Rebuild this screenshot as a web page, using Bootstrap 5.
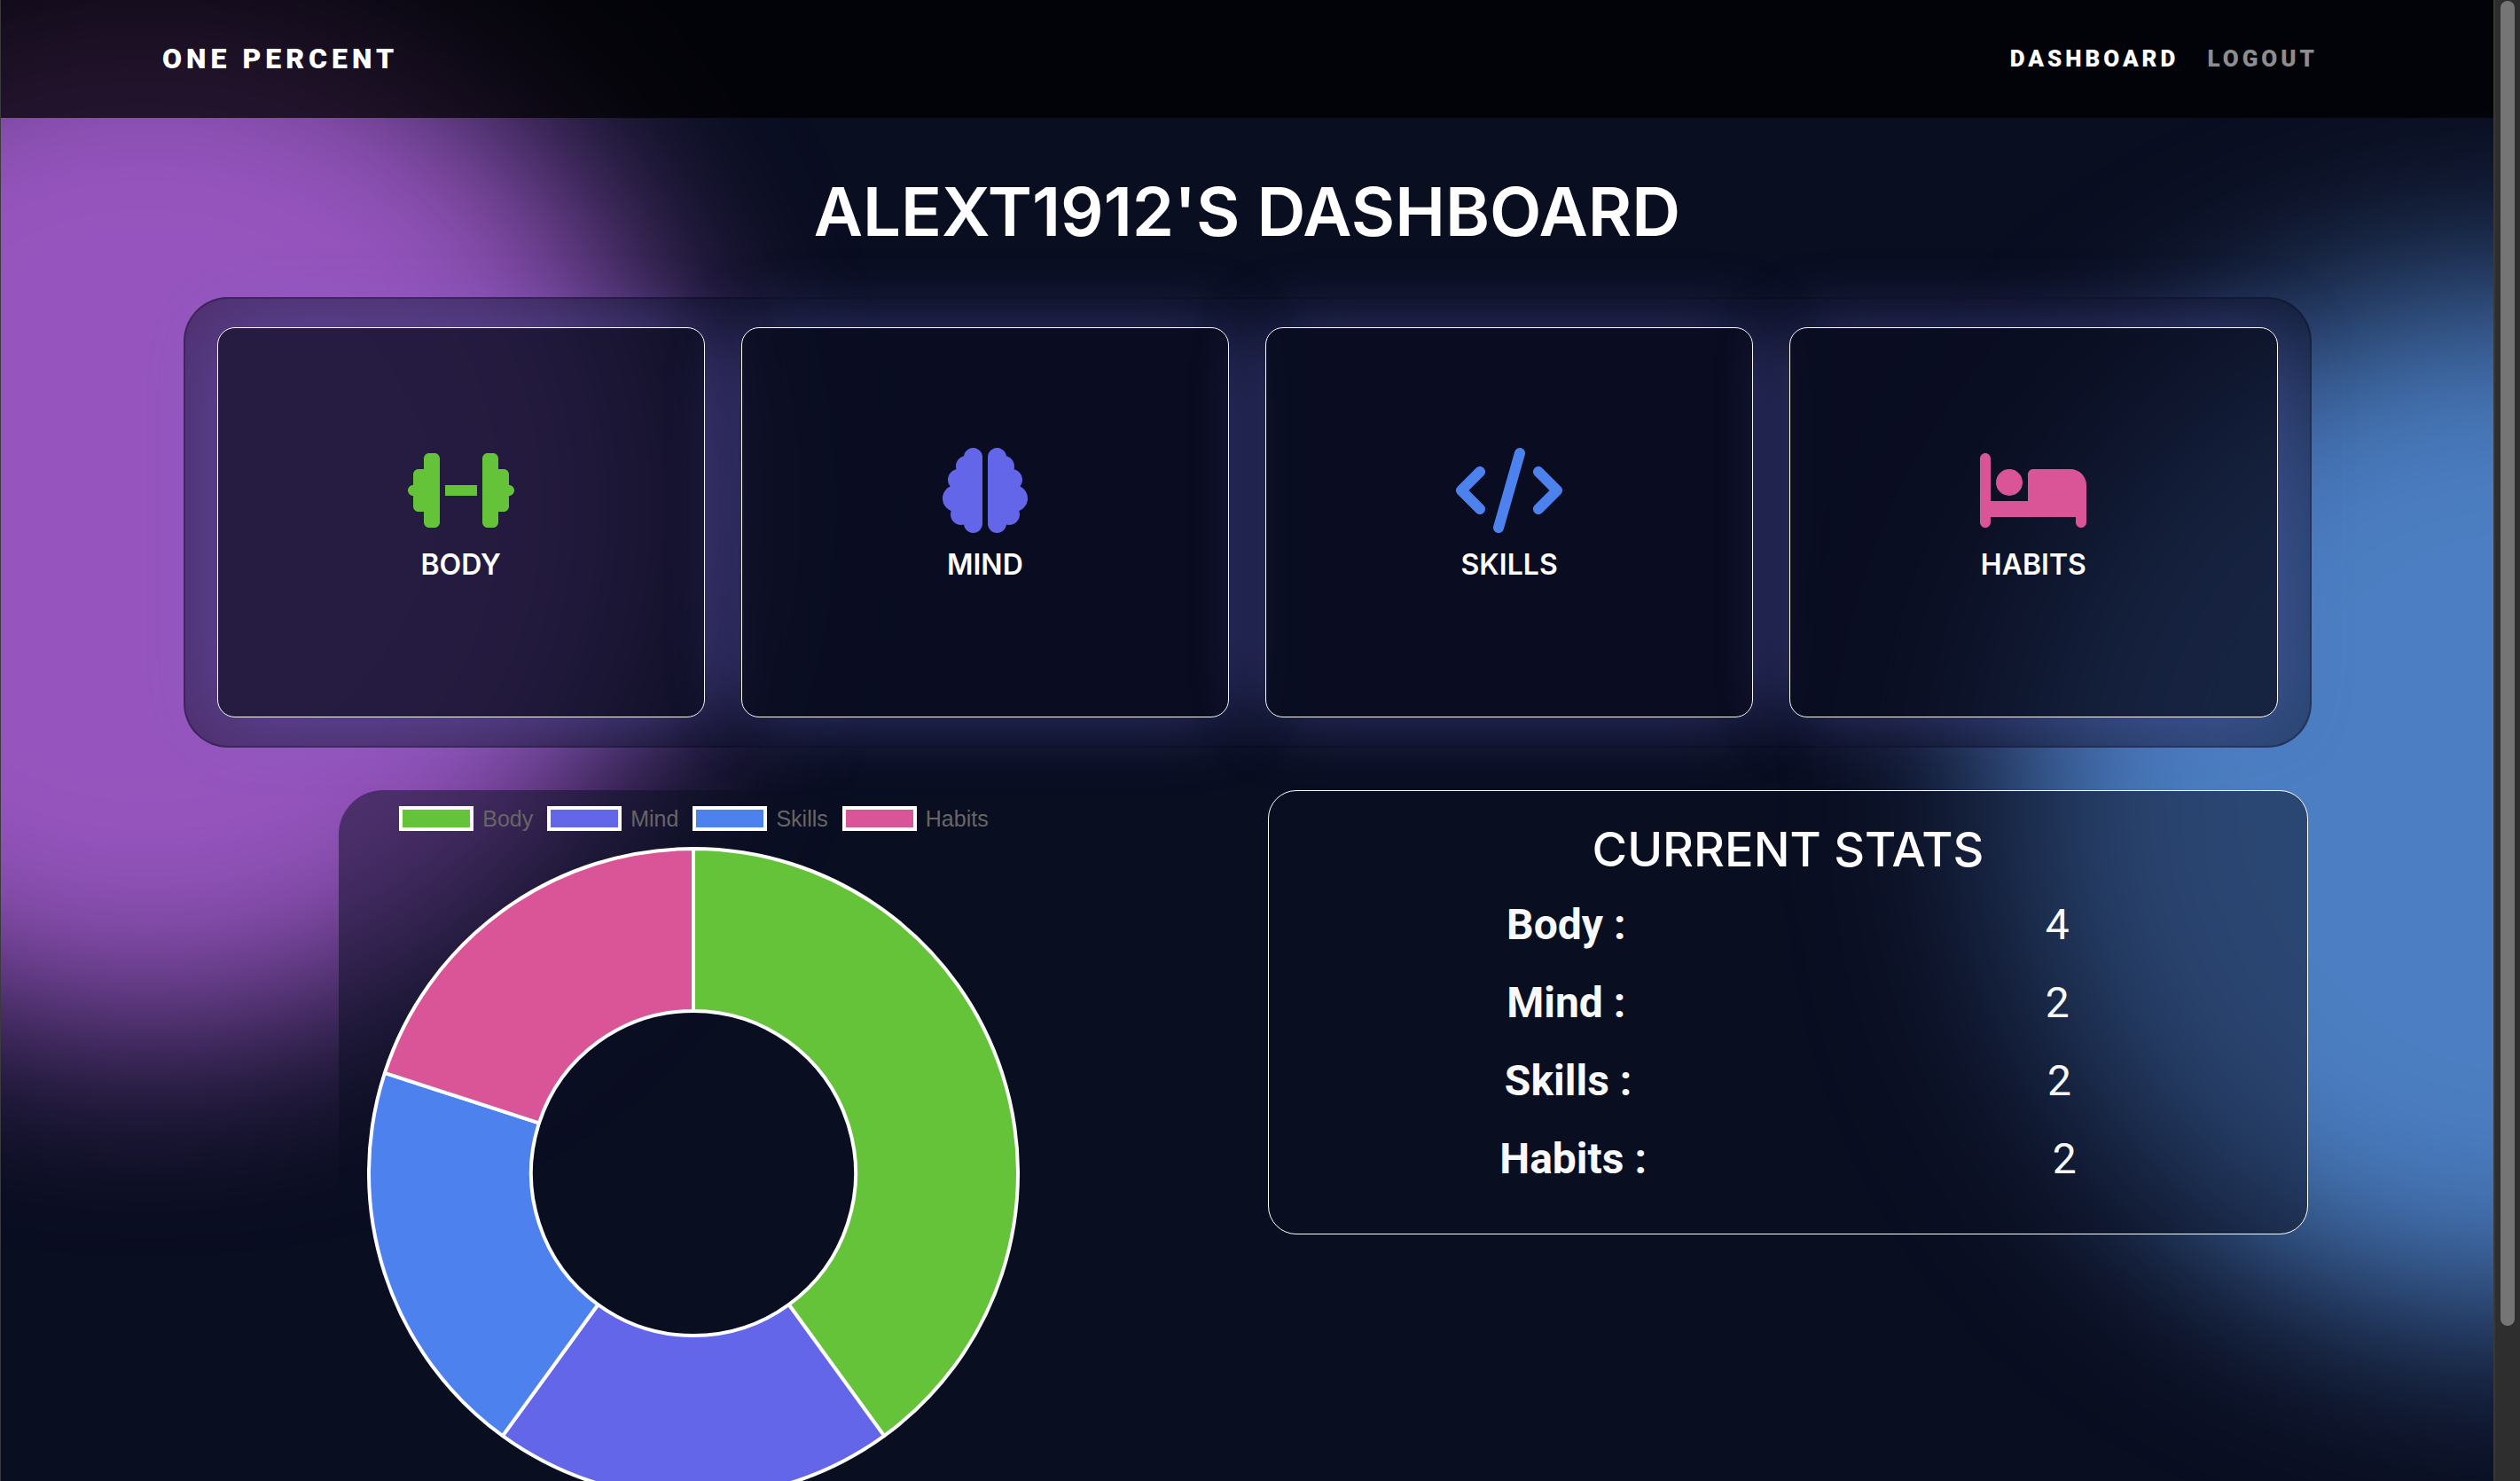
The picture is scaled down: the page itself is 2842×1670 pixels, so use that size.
<!DOCTYPE html>
<html lang="en">
<head>
<meta charset="utf-8">
<meta name="viewport" content="width=device-width, initial-scale=1">
<title>One Percent</title>
<link rel="stylesheet" href="https://cdn.jsdelivr.net/npm/bootstrap@5.3.0/dist/css/bootstrap.min.css">
<style>
:root{--night:10,14,33;--body-c:#65c33a;--mind-c:#6466e9;--skills-c:#4d82ee;--habits-c:#da5597}
body{background:rgb(var(--night));color:#fff;font-family:Roboto,"Liberation Sans",sans-serif}
.shell{height:100vh;border-left:1px solid #3a3a3f;background:rgb(var(--night))}
.page{min-width:0;overflow:hidden auto;scrollbar-width:none;position:relative;isolation:isolate}
.page::-webkit-scrollbar{display:none}
.orb{position:absolute;z-index:-1;border-radius:50%;filter:blur(110px)}
.orb-purple{width:1180px;height:1180px;left:-425px;top:-20px;background:#9655be}
.orb-blue{width:1160px;height:1160px;right:-610px;top:325px;background:#4b7ec2}
.topbar{background:rgba(0,0,0,.74);height:133px;padding:0 182px 2px}
.topbar .navbar-brand{font-size:32px;font-weight:900;letter-spacing:5px;line-height:48px;padding:0;margin:0}
.topbar .navbar-nav .nav-link{font-size:26px;font-weight:900;letter-spacing:4px;line-height:40px;padding:8px 16px;color:#8d8d90}
.topbar .navbar-nav .nav-link.active{color:#fff}
.heading{font-family:Inter,"Liberation Sans",sans-serif;font-weight:600}
.page-title{font-size:76px;line-height:96px;margin:57px 0 49px}
.wrap{max-width:2400px}
.tiles{background:rgba(var(--night),.5);border:2px solid rgba(5,7,20,.3);border-radius:50px;padding:32px 36px;gap:41px}
.tile{flex:1 1 0;height:440px;border:1px solid #fff;border-radius:20px;background:rgba(var(--night),.6);box-shadow:0 0 80px rgba(110,110,225,.42);color:#fff}
.tile svg{height:96px}
.tile h2{font-size:32px;line-height:40px;margin:16px 0}
.lower{gap:76px;padding:0 4px;margin-top:48px}
.chart-panel{width:800px;border-radius:50px;background:rgba(var(--night),.5);padding:18px 32px 32px}
.legend-row{gap:16px;margin-bottom:18px;font:25px/28px "Liberation Sans",Arial,sans-serif;color:#666}
.legend-item{gap:10px}
.swatch{width:84px;height:28px;border:4px solid #fff}
.stats{flex:0 0 49%;border:1px solid #fff;border-radius:32px;background:rgba(var(--night),.5);padding:32px 31px}
.stats h2{font-size:54px;font-weight:500;line-height:67px;margin-bottom:16px}
.stats dl{font-size:48px;line-height:72px;color:#f8f9fa}
.stats dl>div{margin-bottom:16px}
.stats dd{margin:0}
.scroller{flex:0 0 30px;background:#2e2e2e;border-left:2px solid #383838;padding:1px 6px}
.scroller-thumb{height:1494px;width:16px;border-radius:8px;background:#757575}
</style>
<script src="https://cdn.jsdelivr.net/npm/bootstrap@5.3.0/dist/js/bootstrap.bundle.min.js"></script>
</head>
<body>
<div class="shell d-flex">
  <div class="page flex-grow-1">
    <div class="orb orb-purple"></div>
    <div class="orb orb-blue"></div>

    <nav class="topbar navbar navbar-expand navbar-dark d-flex justify-content-between">
      <a class="navbar-brand" href="#">ONE PERCENT</a>
      <div class="navbar-nav">
        <a class="nav-link active" href="#" aria-current="page">DASHBOARD</a>
        <a class="nav-link" href="#">LOGOUT</a>
      </div>
    </nav>

    <main>
      <h1 class="heading page-title text-center">ALEXT1912'S DASHBOARD</h1>

      <section class="wrap tiles d-flex mx-auto">
        <a href="#" class="tile d-flex flex-column align-items-center justify-content-center text-decoration-none">
          <svg viewBox="0 0 640 512" fill="var(--body-c)" aria-hidden="true"><path d="M96 64c0-17.7 14.3-32 32-32h32c17.7 0 32 14.3 32 32V224v64V448c0 17.7-14.3 32-32 32H128c-17.7 0-32-14.3-32-32V384H64c-17.7 0-32-14.3-32-32V288c-17.7 0-32-14.3-32-32s14.3-32 32-32V160c0-17.7 14.3-32 32-32H96V64zm448 0v64h32c17.7 0 32 14.3 32 32v64c17.7 0 32 14.3 32 32s-14.3 32-32 32v64c0 17.7-14.3 32-32 32H544v64c0 17.7-14.3 32-32 32H480c-17.7 0-32-14.3-32-32V288 224 64c0-17.7 14.3-32 32-32h32c17.7 0 32 14.3 32 32zM416 224v64H224V224H416z"/></svg>
          <h2 class="heading">BODY</h2>
        </a>
        <a href="#" class="tile d-flex flex-column align-items-center justify-content-center text-decoration-none">
          <svg viewBox="0 0 512 512" fill="var(--mind-c)" aria-hidden="true"><path d="M184 0c30.9 0 56 25.1 56 56V456c0 30.9-25.1 56-56 56c-28.9 0-52.7-21.9-55.7-50.1c-5.2 1.4-10.7 2.1-16.3 2.1c-35.3 0-64-28.7-64-64c0-7.4 1.3-14.6 3.6-21.2C21.4 367.4 0 338.2 0 304c0-31.9 18.7-59.5 45.8-72.3C37.1 220.8 32 207 32 192c0-30.7 21.6-56.3 50.4-62.6C80.8 123.9 80 118 80 112c0-29.9 20.6-55.1 48.3-62.1C131.3 21.9 155.1 0 184 0zM328 0c28.9 0 52.6 21.9 55.7 49.9c27.8 7 48.3 32.1 48.3 62.1c0 6-.8 11.9-2.4 17.4c28.8 6.2 50.4 31.9 50.4 62.6c0 15-5.1 28.8-13.8 39.7C493.3 244.5 512 272.1 512 304c0 34.2-21.4 63.4-51.6 74.8c2.3 6.6 3.6 13.8 3.6 21.2c0 35.3-28.7 64-64 64c-5.6 0-11.1-.7-16.3-2.1c-3 28.2-26.8 50.1-55.7 50.1c-30.9 0-56-25.1-56-56V56c0-30.9 25.1-56 56-56z"/></svg>
          <h2 class="heading">MIND</h2>
        </a>
        <a href="#" class="tile d-flex flex-column align-items-center justify-content-center text-decoration-none">
          <svg viewBox="0 0 640 512" fill="var(--skills-c)" aria-hidden="true"><path d="M392.8 1.2c-17-4.9-34.7 5-39.6 22l-128 448c-4.9 17 5 34.7 22 39.6s34.7-5 39.6-22l128-448c4.9-17-5-34.7-22-39.6zm80.6 120.1c-12.5 12.5-12.5 32.8 0 45.3L562.7 256l-89.4 89.4c-12.5 12.5-12.5 32.8 0 45.3s32.8 12.5 45.3 0l112-112c12.5-12.5 12.5-32.8 0-45.3l-112-112c-12.5-12.5-32.8-12.5-45.3 0zm-306.7 0c-12.5-12.5-32.8-12.5-45.3 0l-112 112c-12.5 12.5-12.5 32.8 0 45.3l112 112c12.5 12.5 32.8 12.5 45.3 0s12.5-32.8 0-45.3L77.3 256l89.4-89.4c12.5-12.5 12.5-32.8 0-45.3z"/></svg>
          <h2 class="heading">SKILLS</h2>
        </a>
        <a href="#" class="tile d-flex flex-column align-items-center justify-content-center text-decoration-none">
          <svg viewBox="0 0 640 512" fill="var(--habits-c)" aria-hidden="true"><path d="M32 32c17.7 0 32 14.3 32 32V320H288V160c0-17.7 14.3-32 32-32H544c53 0 96 43 96 96V448c0 17.7-14.3 32-32 32s-32-14.3-32-32V416H352 320 64v32c0 17.7-14.3 32-32 32s-32-14.3-32-32V64C0 46.3 14.3 32 32 32zm144 96a80 80 0 1 1 0 160 80 80 0 1 1 0-160z"/></svg>
          <h2 class="heading">HABITS</h2>
        </a>
      </section>

      <section class="wrap lower d-flex align-items-start mx-auto">
        <div class="flex-grow-1 d-flex justify-content-center">
          <div class="chart-panel">
            <div class="legend-row d-flex justify-content-center">
              <span class="legend-item d-flex"><i class="swatch" style="background:var(--body-c)"></i>Body</span>
              <span class="legend-item d-flex"><i class="swatch" style="background:var(--mind-c)"></i>Mind</span>
              <span class="legend-item d-flex"><i class="swatch" style="background:var(--skills-c)"></i>Skills</span>
              <span class="legend-item d-flex"><i class="swatch" style="background:var(--habits-c)"></i>Habits</span>
            </div>
            <svg class="d-block w-100" viewBox="0 0 736 736" stroke="#fff" stroke-width="4" stroke-linejoin="bevel" role="img" aria-label="Body 4, Mind 2, Skills 2, Habits 2">
              <path fill="var(--body-c)" d="M368 2A366 366 0 0 1 583.13 664.1L475.56 516.05A183 183 0 0 0 368 185Z"/>
              <path fill="var(--mind-c)" d="M583.13 664.1A366 366 0 0 1 152.87 664.1L260.44 516.05A183 183 0 0 0 475.56 516.05Z"/>
              <path fill="var(--skills-c)" d="M152.87 664.1A366 366 0 0 1 19.91 254.9L193.96 311.45A183 183 0 0 0 260.44 516.05Z"/>
              <path fill="var(--habits-c)" d="M19.91 254.9A366 366 0 0 1 368 2L368 185A183 183 0 0 0 193.96 311.45Z"/>
            </svg>
          </div>
        </div>
        <div class="stats">
          <h2 class="heading text-center">CURRENT STATS</h2>
          <dl class="mb-0">
            <div class="d-flex justify-content-around"><dt>Body :</dt><dd>4</dd></div>
            <div class="d-flex justify-content-around"><dt>Mind :</dt><dd>2</dd></div>
            <div class="d-flex justify-content-around"><dt>Skills :</dt><dd>2</dd></div>
            <div class="d-flex justify-content-around"><dt>Habits :</dt><dd>2</dd></div>
          </dl>
        </div>
      </section>
    </main>
  </div>
  <div class="scroller" aria-hidden="true"><div class="scroller-thumb"></div></div>
</div>
</body>
</html>
